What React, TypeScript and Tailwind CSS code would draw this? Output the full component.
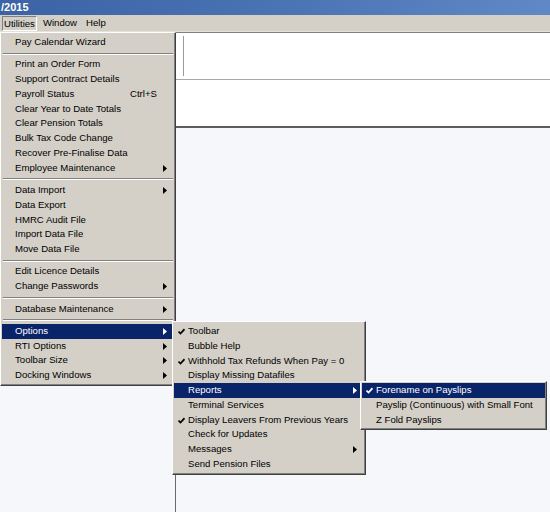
import React from "react";

type Item = {
  label?: string;
  sep?: boolean;
  arrow?: boolean;
  checked?: boolean;
  shortcut?: string;
  active?: boolean;
};

const mainItems: Item[] = [
  { label: "Pay Calendar Wizard" },
  { sep: true },
  { label: "Print an Order Form" },
  { label: "Support Contract Details" },
  { label: "Payroll Status", shortcut: "Ctrl+S" },
  { label: "Clear Year to Date Totals" },
  { label: "Clear Pension Totals" },
  { label: "Bulk Tax Code Change" },
  { label: "Recover Pre-Finalise Data" },
  { label: "Employee Maintenance", arrow: true },
  { sep: true },
  { label: "Data Import", arrow: true },
  { label: "Data Export" },
  { label: "HMRC Audit File" },
  { label: "Import Data File" },
  { label: "Move Data File" },
  { sep: true },
  { label: "Edit Licence Details" },
  { label: "Change Passwords", arrow: true },
  { sep: true },
  { label: "Database Maintenance", arrow: true },
  { sep: true },
  { label: "Options", arrow: true, active: true },
  { label: "RTI Options", arrow: true },
  { label: "Toolbar Size", arrow: true },
  { label: "Docking Windows", arrow: true },
];

const optionItems: Item[] = [
  { label: "Toolbar", checked: true },
  { label: "Bubble Help" },
  { label: "Withhold Tax Refunds When Pay = 0", checked: true },
  { label: "Display Missing Datafiles" },
  { label: "Reports", arrow: true, active: true },
  { label: "Terminal Services" },
  { label: "Display Leavers From Previous Years", checked: true },
  { label: "Check for Updates" },
  { label: "Messages", arrow: true },
  { label: "Send Pension Files" },
];

const reportItems: Item[] = [
  { label: "Forename on Payslips", checked: true, active: true },
  { label: "Payslip (Continuous) with Small Font" },
  { label: "Z Fold Payslips" },
];

function Check({ white }: { white?: boolean }) {
  return (
    <svg width="7" height="7" viewBox="0 0 7 7" className="absolute left-[4px] top-[4px]">
      <path
        d="M0.5 3.5 L2.5 5.5 L6.5 1.2"
        fill="none"
        stroke={white ? "#ffffff" : "#000000"}
        strokeWidth="1.7"
      />
    </svg>
  );
}

function Arrow({ white }: { white?: boolean }) {
  return (
    <svg width="4" height="7" viewBox="0 0 4 7" className="absolute right-[7px] top-[4px]">
      <path d="M0 0 L4 3.5 L0 7 Z" fill={white ? "#ffffff" : "#000000"} />
    </svg>
  );
}

function MenuList({ items, indent }: { items: Item[]; indent: string }) {
  return (
    <>
      {items.map((item, index) =>
        item.sep ? (
          <div key={index} className="h-[7.65px] flex items-center px-[1px]">
            <div className="w-full border-t border-t-[#808080] border-b border-b-white" />
          </div>
        ) : (
          <div
            key={index}
            className={
              (item.active
                ? "relative h-[14.75px] leading-[14.75px] bg-[#0a246a] text-white whitespace-nowrap "
                : "relative h-[14.75px] leading-[14.75px] text-black whitespace-nowrap ") + indent
            }
          >
            {item.checked && <Check white={item.active} />}
            {item.label}
            {item.shortcut && (
              <span className="absolute left-[128px] top-0">{item.shortcut}</span>
            )}
            {item.arrow && <Arrow white={item.active} />}
          </div>
        )
      )}
    </>
  );
}

export default function App() {
  return (
    <div
      className="relative w-[550px] h-[512px] overflow-hidden bg-[#f6f7fb] text-[9.6px]"
      style={{ fontFamily: '"Liberation Sans", Arial, sans-serif' }}
    >
      {/* title bar */}
      <div className="h-[15px] bg-gradient-to-r from-[#3b63a5] via-[#4a73b4] to-[#6188c6] text-white font-bold text-[11px] leading-[15px] pl-[1px]">
        /2015
      </div>
      {/* menu bar */}
      <div className="h-[17px] bg-[#d4d0c8] flex items-center pl-[2px] border-b border-b-[#e4e1db]">
        <div className="h-[15px] leading-[13px] px-[1px] border border-t-[#808080] border-l-[#808080] border-r-white border-b-white">
          Utilities
        </div>
        <div className="ml-[6px]">Window</div>
        <div className="ml-[9px]">Help</div>
      </div>
      {/* window body */}
      <div className="flex h-[480px]">
        <div className="w-[175px] bg-[#f6f7fb]" />
        <div className="flex-1 flex flex-col border-l border-l-[#6b6b6b]">
          <div className="h-[48px] bg-white border-t border-t-[#808080] border-b border-b-[#a8a8a8] pl-[7px] pt-[3px]">
            <div className="w-[1px] h-[40px] bg-[#9a9a9a]" />
          </div>
          <div className="h-[48px] bg-white border-b-2 border-b-[#5e5e5e]" />
          <div className="flex-1 bg-[#f6f7fb]" />
        </div>
      </div>

      {/* Utilities menu */}
      <div className="absolute left-0 top-[32px] w-[176px] bg-[#d4d0c8] border border-t-white border-l-white border-r-[#404040] border-b-[#404040] shadow-[inset_-1px_-1px_0_#808080] pt-[2px] pb-[2px] px-[1px]">
        <MenuList items={mainItems} indent="pl-[13px]" />
      </div>

      {/* Options submenu */}
      <div className="absolute left-[172px] top-[321px] w-[194px] bg-[#d4d0c8] border border-t-white border-l-white border-r-[#404040] border-b-[#404040] shadow-[inset_-1px_-1px_0_#808080] pt-[2px] pb-[2px] px-[1px]">
        <MenuList items={optionItems} indent="pl-[14px]" />
      </div>

      {/* Reports submenu */}
      <div className="absolute left-[360px] top-[381px] w-[187px] bg-[#d4d0c8] border border-t-white border-l-white border-r-[#404040] border-b-[#404040] shadow-[inset_-1px_-1px_0_#808080] pt-[1px] pb-[2px] px-[1px]">
        <MenuList items={reportItems} indent="pl-[14px]" />
      </div>
    </div>
  );
}
